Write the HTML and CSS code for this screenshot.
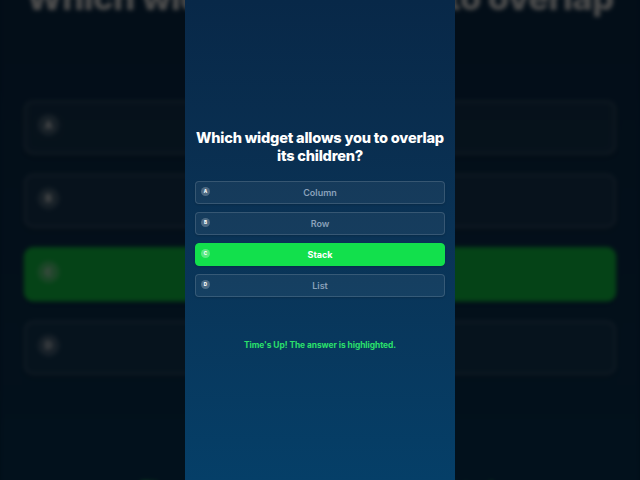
FILE: index.html
```html
<!DOCTYPE html>
<html lang="en">
<head>
<meta charset="utf-8">
<title>Quiz</title>
<link rel="stylesheet" href="styles.css">
</head>
<body>
<div class="stage">
  <div class="panel ghost" aria-hidden="true">
    <h1 class="question">Which widget allows you to overlap its children?</h1>
    <div class="options">
      <div class="option"><span class="badge">A</span><span class="label">Column</span></div>
      <div class="option"><span class="badge">B</span><span class="label">Row</span></div>
      <div class="option correct"><span class="badge">C</span><span class="label">Stack</span></div>
      <div class="option"><span class="badge">D</span><span class="label">List</span></div>
    </div>
    <p class="status">Time's Up! The answer is highlighted.</p>
  </div>
  <div class="panel main">
    <h1 class="question">Which widget allows you to overlap its children?</h1>
    <div class="options">
      <div class="option"><span class="badge">A</span><span class="label">Column</span></div>
      <div class="option"><span class="badge">B</span><span class="label">Row</span></div>
      <div class="option correct"><span class="badge">C</span><span class="label">Stack</span></div>
      <div class="option"><span class="badge">D</span><span class="label">List</span></div>
    </div>
    <p class="status">Time's Up! The answer is highlighted.</p>
  </div>
</div>
</body>
</html>
```

FILE: styles.css
```css
* { box-sizing: border-box; }

html, body {
  margin: 0;
  padding: 0;
  width: 640px;
  height: 480px;
  overflow: hidden;
  background: #020c17;
  font-family: Inter, "Liberation Sans", sans-serif;
}

.stage {
  display: grid;
  width: 640px;
  height: 480px;
  overflow: hidden;
  justify-items: center;
}

.panel {
  grid-area: 1 / 1;
  width: 270px;
  height: 480px;
  padding: 0 10px;
  display: flex;
  flex-direction: column;
  justify-content: center;
  background: linear-gradient(to bottom, #082848 0%, #0a3356 50%, #053f68 100%);
}

.ghost {
  z-index: 0;
  transform: scale(2.37);
  filter: brightness(0.3) blur(0.8px);
}

.main {
  z-index: 1;
}

.question {
  margin: 0 0 16px;
  color: #ffffff;
  font-size: 14.6px;
  font-weight: 800;
  line-height: 18px;
  text-align: center;
  letter-spacing: -0.22px;
}

.options {
  display: flex;
  flex-direction: column;
  gap: 8px;
}

.option {
  height: 23px;
  display: grid;
  grid-template-columns: 9px 1fr 9px;
  align-items: center;
  padding: 0 5px;
  border: 1px solid rgba(255, 255, 255, 0.14);
  border-radius: 4px;
  background: rgba(255, 255, 255, 0.05);
  box-shadow: 0 1px 2px rgba(0, 0, 0, 0.15);
}

.badge {
  width: 9px;
  height: 9px;
  margin-top: -3px;
  border-radius: 50%;
  background: rgba(255, 255, 255, 0.24);
  color: #ffffff;
  font-size: 4.5px;
  font-weight: 800;
  line-height: 9px;
  text-align: center;
}

.label {
  grid-column: 2;
  text-align: center;
  color: #8aa1ba;
  font-size: 9px;
  font-weight: 600;
  line-height: 12px;
}

.option.correct {
  background: #12e04c;
  border-color: #12e04c;
}

.option.correct .badge {
  background: rgba(255, 255, 255, 0.3);
}

.option.correct .label {
  color: #ffffff;
  font-weight: 700;
}

.status {
  margin: 42px 0 0;
  color: #2be06b;
  font-size: 8.4px;
  font-weight: 700;
  line-height: 12px;
  text-align: center;
  letter-spacing: -0.05px;
}
```
